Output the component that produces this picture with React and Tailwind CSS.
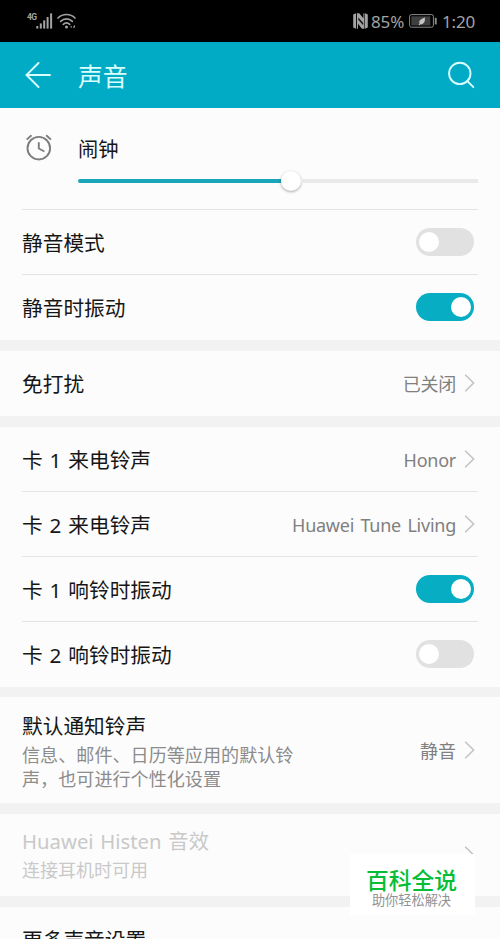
const font = 'font-["Noto_Sans","Noto_Sans_CJK_SC",sans-serif]'

function Signal() {
  return (
    <svg className="h-4 w-[17px]" viewBox="0 0 17 16" fill="#a3a3a3">
      <rect x="0.3" y="13" width="2" height="2.6" />
      <rect x="3.8" y="10.4" width="2" height="5.2" />
      <rect x="7.2" y="7.4" width="2" height="8.2" />
      <rect x="10.6" y="4" width="2" height="11.6" />
      <rect x="14.1" y="0.4" width="2" height="15.2" />
    </svg>
  )
}

function Wifi() {
  return (
    <svg className="h-4 w-[19px]" viewBox="0 0 19 16" fill="none" stroke="#a3a3a3" strokeWidth="1.7" strokeLinecap="round">
      <path d="M1 5C5.8 0.3 13.2 0.3 18 5" />
      <path d="M3.7 8.4c3.4-3.3 8.2-3.3 11.6 0" />
      <path d="M6.3 11.4c1.9-1.8 4.5-1.8 6.4 0" />
      <circle cx="9.5" cy="14" r="1.5" fill="#a3a3a3" stroke="none" />
      <path d="M14.2 13.6v.4M17.4 12.8v1l-.6.6" strokeWidth="1.3" />
    </svg>
  )
}

function Nfc() {
  return (
    <svg className="h-4 w-[15px]" viewBox="0 0 15 16">
      <path d="M0.2 1.6 3 0.2v15.6l-2.8-1.2z" fill="#a3a3a3" />
      <path d="M12 0.2 14.8 1.4v13.2L12 15.8z" fill="#a3a3a3" />
      <path d="M3.9 0.2h2.3l4.2 5V0.2h1v15.6H8.9L5 10.8v5H3.9z" fill="#a3a3a3" />
      <path d="M5.3 4.6v2.2l4.9 5.4V9.9z" fill="#111" />
    </svg>
  )
}

function Battery() {
  return (
    <svg className="h-[14px] w-7" viewBox="0 0 28 14">
      <rect x="0.6" y="0.6" width="23.8" height="12.6" rx="1.8" fill="none" stroke="#8c8c8c" strokeWidth="1" />
      <rect x="2.3" y="2.3" width="19" height="9.2" fill="#3f3f3f" />
      <rect x="25.8" y="3.8" width="1.9" height="6.6" fill="#8c8c8c" />
      <path d="M15.8 3.2c.6 3.8-.7 7-4.2 7.1l-1.5.9-.5-.6 1-1c-1.4-3.7 2.2-4.5 5.2-6.4z" fill="#c4c4c4" />
    </svg>
  )
}

function AlarmIcon() {
  return (
    <svg className="h-7 w-7" viewBox="0 0 28 28" fill="none" stroke="#7d7d7d" strokeWidth="1.9">
      <circle cx="13.8" cy="15.2" r="11.3" />
      <path d="M13.8 9.2v6.3l5.6 3" strokeLinejoin="round" />
      <path d="M1.7 6.6 6.5 2.2M26 6.6 21.2 2.2" />
    </svg>
  )
}

function Chevron() {
  return (
    <svg className="ml-2 h-[18px] w-3 shrink-0" viewBox="0 0 12 18" fill="none" stroke="#c4c4c4" strokeWidth="1.6">
      <path d="M1.2 0.8 9.6 9l-8.4 8.2" />
    </svg>
  )
}

function Toggle({ on }) {
  return (
    <span className={`flex h-7 w-[58px] items-center rounded-full px-[3px] ${on ? 'justify-end bg-[#06adc3]' : 'bg-[#e1e1e1]'}`}>
      <span className="h-5 w-5 rounded-full bg-white" />
    </span>
  )
}

function Row({ title, value, toggle, divider }) {
  return (
    <div className="px-[22px]">
      <div className={`flex h-[65px] items-center justify-between border-b ${divider ? 'border-[#e4e4e4]' : 'border-transparent'}`}>
        <span className="pt-[3px] text-[20.7px] text-[#161616] [word-spacing:1.5px]">{title}</span>
        {value && (
          <span className="mr-0.5 flex items-center text-lg text-[#808080]">
            <span className="pt-px tracking-[-0.25px] [word-spacing:2px]">{value}</span>
            <Chevron />
          </span>
        )}
        {toggle && (
          <span className="mr-1">
            <Toggle on={toggle === 'on'} />
          </span>
        )}
      </div>
    </div>
  )
}

export default function App() {
  return (
    <div className={`relative h-[939px] w-[500px] overflow-hidden bg-[#f2f2f2] ${font}`}>
      {/* Status bar */}
      <div className="flex h-[42px] items-center justify-between bg-black pr-[25px] pl-[27px] text-[#a3a3a3]">
        <div className="flex items-center">
          <span className="mb-2 w-[9px] font-['Roboto'] text-[8.5px] leading-none font-bold tracking-[-0.6px]">4G</span>
          <Signal />
          <span className="ml-[4px] flex"><Wifi /></span>
        </div>
        <div className="flex items-center text-[17px] leading-none">
          <Nfc />
          <span className="ml-[3px] tracking-[-0.2px]">85%</span>
          <span className="ml-[5px]"><Battery /></span>
          <span className="ml-[5px] tracking-[-0.2px]">1:20</span>
        </div>
      </div>

      {/* Header */}
      <header className="flex h-[66px] items-center bg-[#02abc5] pr-[25px] pl-[25px] text-[#d9ffff]">
        <svg className="h-[26px] w-[26px]" viewBox="0 0 26 26" fill="none" stroke="currentColor" strokeWidth="1.9" strokeLinecap="round">
          <path d="M1.5 13H25M13.5 1 1.5 13l12 12" />
        </svg>
        <h1 className="ml-[27px] pt-[3px] text-[24.8px] leading-none">声音</h1>
        <svg className="ml-auto h-7 w-7" viewBox="0 0 28 28" fill="none" stroke="currentColor" strokeWidth="1.9" strokeLinecap="round">
          <circle cx="12.8" cy="12.4" r="10.7" />
          <path d="m20.4 20.2 6 6" />
        </svg>
      </header>

      <main className="flex flex-col">
        <section className="bg-[#fcfcfc]">
          <div className="px-[22px]">
            <div className="flex h-[102px] border-b border-[#e4e4e4] pl-[3px]">
              <div className="mt-[25px]">
                <AlarmIcon />
              </div>
              <div className="ml-[25px] flex-1">
                <div className="mt-[26px] text-[20.3px] leading-[30px] text-[#161616]">闹钟</div>
                <div className="mt-[7px] flex h-5 items-center">
                  <span className="h-1 w-[203px] rounded-l-full bg-[#1aa5b9]" />
                  <span className="h-5 w-5 rounded-full bg-white shadow-[0_1px_3px_rgba(0,0,0,0.35)]" />
                  <span className="h-1 flex-1 bg-[#e9e9e9]" />
                </div>
              </div>
            </div>
          </div>
          <Row title="静音模式" toggle="off" divider />
          <Row title="静音时振动" toggle="on" />
        </section>

        <section className="mt-[11px] bg-[#fcfcfc]">
          <Row title="免打扰" value="已关闭" />
        </section>

        <section className="mt-[11px] bg-[#fcfcfc]">
          <Row title="卡 1 来电铃声" value="Honor" divider />
          <Row title="卡 2 来电铃声" value="Huawei Tune Living" divider />
          <Row title="卡 1 响铃时振动" toggle="on" divider />
          <Row title="卡 2 响铃时振动" toggle="off" />
        </section>

        <section className="mt-2.5 flex h-[106px] items-center justify-between bg-[#fcfcfc] px-[22px]">
          <div className="pt-0.5">
            <div className="text-[20.7px] leading-[29px] text-[#161616]">默认通知铃声</div>
            <p className="mt-0.5 w-[276px] text-[18.1px] leading-6 text-[#8c8c8c]">信息、邮件、日历等应用的默认铃声，也可进行个性化设置</p>
          </div>
          <span className="mr-0.5 flex items-center text-lg text-[#808080]">
            <span className="pt-px">静音</span>
            <Chevron />
          </span>
        </section>

        <section className="mt-[11px] flex h-[82px] items-center justify-between bg-[#fcfcfc] px-[22px]">
          <div className="pt-px">
            <div className="text-[20.3px] leading-[29px] text-[#c9c9c9] [word-spacing:1.5px]">Huawei Histen 音效</div>
            <p className="text-lg leading-[29px] text-[#c9c9c9]">连接耳机时可用</p>
          </div>
          <span className="mr-0.5 flex">
            <Chevron />
          </span>
        </section>

        <section className="mt-[11px] bg-[#fcfcfc]">
          <Row title="更多声音设置" />
        </section>
      </main>

      {/* Corner badge */}
      <div className="absolute top-[854px] left-[350px] flex h-[61px] w-[125px] flex-col items-center bg-white font-['Noto_Sans_CJK_SC',sans-serif]">
        <div className="mt-[13px] mr-0.5 text-[22.8px] leading-[25px] font-medium text-[#06be36]">百科全说</div>
        <div className="mr-0.5 text-[13.2px] leading-4 text-[#929292]">助你轻松解决</div>
      </div>
    </div>
  )
}
